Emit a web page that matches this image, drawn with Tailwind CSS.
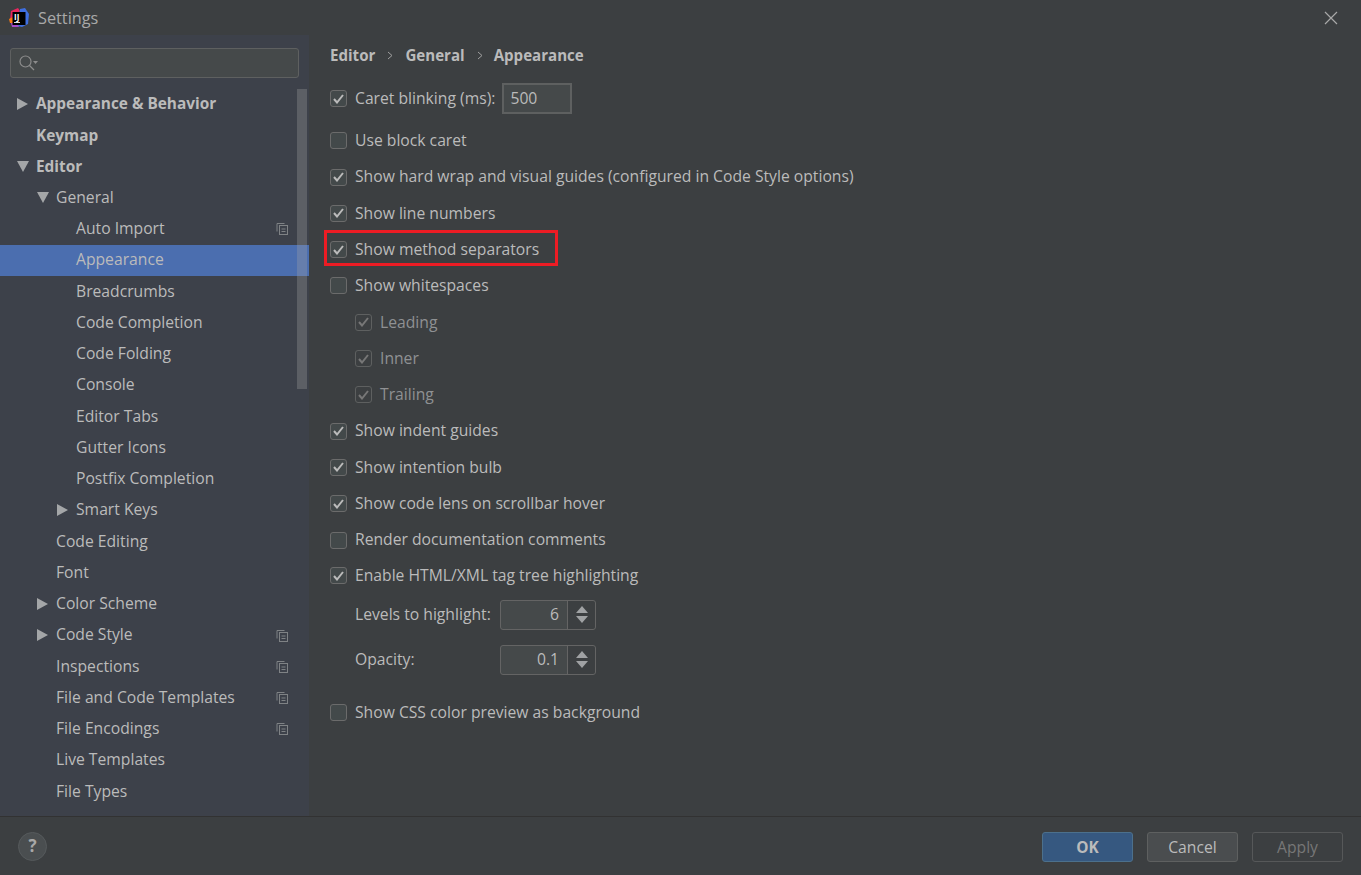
<!DOCTYPE html>
<html lang="en">
<head>
  <meta charset="UTF-8">
  <title>Settings</title>
  <script src="https://cdn.jsdelivr.net/npm/@tailwindcss/browser@4"></script>
</head>
<body class="bg-[#3c3f41] text-[#bbbbbb] font-['Open_Sans','Noto_Sans',sans-serif] text-[15.7px] overflow-hidden">

<div class="flex flex-col h-[875px] w-[1361px]">
  <!-- title bar -->
  <header class="relative flex items-center h-[35px] shrink-0 pl-[9px] pr-[22px]">
    <svg class="w-[20px] h-[20px]" viewBox="0 0 20 20">
      <path d="M2 3 L9 0 L11 3 L3 17 L1 12 Z" fill="#e8265e"/>
      <path d="M0 11 L4 9 L4 15 L1 15 Z" fill="#f97a12"/>
      <path d="M11 1 L16 0 L20 6 L19 16 L13 19 L8 18 Z" fill="#3f6fe0"/>
      <path d="M2 15 L8 15 L10 19 L3 19 Z" fill="#a54bc9"/>
      <rect x="3.5" y="4" width="13" height="13" fill="#000"/>
      <rect x="5" y="14" width="6" height="1" fill="#ddd"/>
    </svg>
    <span class="absolute left-[14px] top-[12px] text-[8px] font-bold text-white leading-[9px]">IJ</span>
    <span class="ml-[9px] mt-[1px] text-[#a9a9a9] text-[16.3px]">Settings</span>
    <svg class="ml-auto w-[16px] h-[16px]" viewBox="0 0 16 16" fill="none" stroke="#a8a8a8" stroke-width="1.2">
      <path d="M2 2 L14 14 M14 2 L2 14"/>
    </svg>
  </header>

  <div class="flex flex-1 min-h-0">
    <!-- sidebar -->
    <aside class="relative w-[309px] shrink-0 bg-[#3d414a] overflow-hidden">
      <div class="flex items-center mx-[10px] mt-[13px] h-[30px] bg-[#45494a] border border-[#5e6060] rounded-[3px] pl-[7px]">
        <svg class="w-[22px] h-[18px]" viewBox="0 0 22 18" fill="none" stroke="#8c8c8c" stroke-width="1.2">
          <circle cx="7.5" cy="7.5" r="5.5"/>
          <path d="M11.5 11.5 L16 16"/>
          <path d="M15 7 L20 7 L17.5 10 Z" fill="#8c8c8c" stroke="none"/>
        </svg>
      </div>

      <nav class="mt-[10.25px]">
        <div class="flex items-center h-[31.25px] pl-[17px] font-bold text-[15.4px]"><svg class="w-[11px] h-[12px] mr-[8px]" viewBox="0 0 11 12"><path d="M0 0 L11 6 L0 12 Z" fill="#a4a6a8"/></svg>Appearance &amp; Behavior</div>
        <div class="flex items-center h-[31.25px] pl-[36px] font-bold text-[15.4px]">Keymap</div>
        <div class="flex items-center h-[31.25px] pl-[17px] font-bold text-[15.4px]"><svg class="w-[12px] h-[11px] mr-[7px]" viewBox="0 0 12 11"><path d="M0 0 L12 0 L6 11 Z" fill="#a4a6a8"/></svg>Editor</div>
        <div class="flex items-center h-[31.25px] pl-[37px]"><svg class="w-[12px] h-[11px] mr-[7px]" viewBox="0 0 12 11"><path d="M0 0 L12 0 L6 11 Z" fill="#a4a6a8"/></svg>General</div>
        <div class="flex items-center h-[31.25px] pl-[76px] pr-[21px] justify-between">Auto Import<svg class="w-[12px] h-[13px]" viewBox="0 0 12 13" fill="none" stroke="#7f8285"><path d="M8.5 1.5 H1 V9.5"/><rect x="3.5" y="3.5" width="8" height="9"/><path d="M5.5 7 H9.5 M5.5 9.5 H9.5"/></svg></div>
        <div class="flex items-center h-[31.25px] pl-[76px] bg-[#4b6eaf]">Appearance</div>
        <div class="flex items-center h-[31.25px] pl-[76px]">Breadcrumbs</div>
        <div class="flex items-center h-[31.25px] pl-[76px]">Code Completion</div>
        <div class="flex items-center h-[31.25px] pl-[76px]">Code Folding</div>
        <div class="flex items-center h-[31.25px] pl-[76px]">Console</div>
        <div class="flex items-center h-[31.25px] pl-[76px]">Editor Tabs</div>
        <div class="flex items-center h-[31.25px] pl-[76px]">Gutter Icons</div>
        <div class="flex items-center h-[31.25px] pl-[76px]">Postfix Completion</div>
        <div class="flex items-center h-[31.25px] pl-[57px]"><svg class="w-[11px] h-[12px] mr-[8px]" viewBox="0 0 11 12"><path d="M0 0 L11 6 L0 12 Z" fill="#a4a6a8"/></svg>Smart Keys</div>
        <div class="flex items-center h-[31.25px] pl-[56px]">Code Editing</div>
        <div class="flex items-center h-[31.25px] pl-[56px]">Font</div>
        <div class="flex items-center h-[31.25px] pl-[37px]"><svg class="w-[11px] h-[12px] mr-[8px]" viewBox="0 0 11 12"><path d="M0 0 L11 6 L0 12 Z" fill="#a4a6a8"/></svg>Color Scheme</div>
        <div class="flex items-center h-[31.25px] pl-[37px] pr-[21px]"><svg class="w-[11px] h-[12px] mr-[8px]" viewBox="0 0 11 12"><path d="M0 0 L11 6 L0 12 Z" fill="#a4a6a8"/></svg>Code Style<svg class="w-[12px] h-[13px] ml-auto" viewBox="0 0 12 13" fill="none" stroke="#7f8285"><path d="M8.5 1.5 H1 V9.5"/><rect x="3.5" y="3.5" width="8" height="9"/><path d="M5.5 7 H9.5 M5.5 9.5 H9.5"/></svg></div>
        <div class="flex items-center h-[31.25px] pl-[56px] pr-[21px] justify-between">Inspections<svg class="w-[12px] h-[13px]" viewBox="0 0 12 13" fill="none" stroke="#7f8285"><path d="M8.5 1.5 H1 V9.5"/><rect x="3.5" y="3.5" width="8" height="9"/><path d="M5.5 7 H9.5 M5.5 9.5 H9.5"/></svg></div>
        <div class="flex items-center h-[31.25px] pl-[56px] pr-[21px] justify-between">File and Code Templates<svg class="w-[12px] h-[13px]" viewBox="0 0 12 13" fill="none" stroke="#7f8285"><path d="M8.5 1.5 H1 V9.5"/><rect x="3.5" y="3.5" width="8" height="9"/><path d="M5.5 7 H9.5 M5.5 9.5 H9.5"/></svg></div>
        <div class="flex items-center h-[31.25px] pl-[56px] pr-[21px] justify-between">File Encodings<svg class="w-[12px] h-[13px]" viewBox="0 0 12 13" fill="none" stroke="#7f8285"><path d="M8.5 1.5 H1 V9.5"/><rect x="3.5" y="3.5" width="8" height="9"/><path d="M5.5 7 H9.5 M5.5 9.5 H9.5"/></svg></div>
        <div class="flex items-center h-[31.25px] pl-[56px]">Live Templates</div>
        <div class="flex items-center h-[31.25px] pl-[56px]">File Types</div>
      </nav>

      <!-- scrollbar thumb, lies over the tree -->
      <div class="absolute left-[297px] top-[54px] w-[10px] h-[300px] bg-[#a6a6a6]/30"></div>
    </aside>

    <!-- options -->
    <main class="flex-1 pl-[21px]">
      <div class="flex items-center h-[41px] font-bold text-[15.1px]">
        Editor
        <svg class="w-[6px] h-[9px] mx-[12px]" viewBox="0 0 6 9" fill="none" stroke="#a0a0a0"><path d="M1 1 L5 4.5 L1 8"/></svg>
        General
        <svg class="w-[6px] h-[9px] ml-[12px] mr-[11px]" viewBox="0 0 6 9" fill="none" stroke="#a0a0a0"><path d="M1 1 L5 4.5 L1 8"/></svg>
        Appearance
      </div>

      <div class="flex items-center h-[36px] mt-[4.5px]">
        <span class="flex items-center justify-center w-[17px] h-[17px] bg-[#43494a] border border-[#6b6b6b] rounded-[3px]"><svg class="w-[11px] h-[10px]" viewBox="0 0 11 10" fill="none" stroke="#bbbbbb" stroke-width="2"><path d="M1 5 L4 8.5 L10 1"/></svg></span>
        <span class="ml-[8px]">Caret blinking (ms):</span>
        <span class="ml-[7px] w-[70px] h-[31px] flex items-center pl-[6px] bg-[#45494a] border-2 border-[#5e6060]">500</span>
      </div>

      <div class="flex items-center h-[36px] mt-[6px]">
        <span class="w-[17px] h-[17px] bg-[#43494a] border border-[#6b6b6b] rounded-[3px]"></span>
        <span class="ml-[8px]">Use block caret</span>
      </div>

      <div class="flex items-center h-[35.9px] mt-[0.8px]">
        <span class="flex items-center justify-center w-[17px] h-[17px] bg-[#43494a] border border-[#6b6b6b] rounded-[3px]"><svg class="w-[11px] h-[10px]" viewBox="0 0 11 10" fill="none" stroke="#bbbbbb" stroke-width="2"><path d="M1 5 L4 8.5 L10 1"/></svg></span>
        <span class="ml-[8px]">Show hard wrap and visual guides (configured in Code Style options)</span>
      </div>
      <div class="flex items-center h-[36.3px]">
        <span class="flex items-center justify-center w-[17px] h-[17px] bg-[#43494a] border border-[#6b6b6b] rounded-[3px]"><svg class="w-[11px] h-[10px]" viewBox="0 0 11 10" fill="none" stroke="#bbbbbb" stroke-width="2"><path d="M1 5 L4 8.5 L10 1"/></svg></span>
        <span class="ml-[8px]">Show line numbers</span>
      </div>
      <div class="relative flex items-center h-[36.3px]">
        <span class="flex items-center justify-center w-[17px] h-[17px] bg-[#43494a] border border-[#6b6b6b] rounded-[3px]"><svg class="w-[11px] h-[10px]" viewBox="0 0 11 10" fill="none" stroke="#bbbbbb" stroke-width="2"><path d="M1 5 L4 8.5 L10 1"/></svg></span>
        <span class="ml-[8px]">Show method separators</span>
        <!-- annotation box drawn over the row -->
        <div class="absolute left-[-6px] top-[-1px] w-[234px] h-[36px] border-[3px] border-[#ed1c24]"></div>
      </div>
      <div class="flex items-center h-[36.3px]">
        <span class="w-[17px] h-[17px] bg-[#43494a] border border-[#6b6b6b] rounded-[3px]"></span>
        <span class="ml-[8px]">Show whitespaces</span>
      </div>

      <div class="flex items-center h-[36px] mt-[0.3px] pl-[25px] text-[#8f9193]">
        <span class="flex items-center justify-center w-[17px] h-[17px] border border-[#5e6060] rounded-[3px]"><svg class="w-[11px] h-[10px]" viewBox="0 0 11 10" fill="none" stroke="#777777" stroke-width="2"><path d="M1 5 L4 8.5 L10 1"/></svg></span>
        <span class="ml-[8px]">Leading</span>
      </div>
      <div class="flex items-center h-[36.3px] pl-[25px] text-[#8f9193]">
        <span class="flex items-center justify-center w-[17px] h-[17px] border border-[#5e6060] rounded-[3px]"><svg class="w-[11px] h-[10px]" viewBox="0 0 11 10" fill="none" stroke="#777777" stroke-width="2"><path d="M1 5 L4 8.5 L10 1"/></svg></span>
        <span class="ml-[8px]">Inner</span>
      </div>
      <div class="flex items-center h-[36.3px] pl-[25px] text-[#8f9193]">
        <span class="flex items-center justify-center w-[17px] h-[17px] border border-[#5e6060] rounded-[3px]"><svg class="w-[11px] h-[10px]" viewBox="0 0 11 10" fill="none" stroke="#777777" stroke-width="2"><path d="M1 5 L4 8.5 L10 1"/></svg></span>
        <span class="ml-[8px]">Trailing</span>
      </div>

      <div class="flex items-center h-[36.3px]">
        <span class="flex items-center justify-center w-[17px] h-[17px] bg-[#43494a] border border-[#6b6b6b] rounded-[3px]"><svg class="w-[11px] h-[10px]" viewBox="0 0 11 10" fill="none" stroke="#bbbbbb" stroke-width="2"><path d="M1 5 L4 8.5 L10 1"/></svg></span>
        <span class="ml-[8px]">Show indent guides</span>
      </div>
      <div class="flex items-center h-[36.3px]">
        <span class="flex items-center justify-center w-[17px] h-[17px] bg-[#43494a] border border-[#6b6b6b] rounded-[3px]"><svg class="w-[11px] h-[10px]" viewBox="0 0 11 10" fill="none" stroke="#bbbbbb" stroke-width="2"><path d="M1 5 L4 8.5 L10 1"/></svg></span>
        <span class="ml-[8px]">Show intention bulb</span>
      </div>
      <div class="flex items-center h-[36.3px]">
        <span class="flex items-center justify-center w-[17px] h-[17px] bg-[#43494a] border border-[#6b6b6b] rounded-[3px]"><svg class="w-[11px] h-[10px]" viewBox="0 0 11 10" fill="none" stroke="#bbbbbb" stroke-width="2"><path d="M1 5 L4 8.5 L10 1"/></svg></span>
        <span class="ml-[8px]">Show code lens on scrollbar hover</span>
      </div>
      <div class="flex items-center h-[36.3px]">
        <span class="w-[17px] h-[17px] bg-[#43494a] border border-[#6b6b6b] rounded-[3px]"></span>
        <span class="ml-[8px]">Render documentation comments</span>
      </div>
      <div class="flex items-center h-[35.6px]">
        <span class="flex items-center justify-center w-[17px] h-[17px] bg-[#43494a] border border-[#6b6b6b] rounded-[3px]"><svg class="w-[11px] h-[10px]" viewBox="0 0 11 10" fill="none" stroke="#bbbbbb" stroke-width="2"><path d="M1 5 L4 8.5 L10 1"/></svg></span>
        <span class="ml-[8px]">Enable HTML/XML tag tree highlighting</span>
      </div>

      <div class="flex items-center h-[30px] mt-[6px] pl-[25px]">
        <span class="w-[145px]">Levels to highlight:</span>
        <div class="flex w-[96px] h-[30px] bg-[#45494a] border border-[#646464] rounded-[3px]">
          <span class="flex-1 flex items-center justify-end pr-[8px] border-r border-[#646464]">6</span>
          <span class="flex flex-col items-center justify-center gap-[3px] w-[27px] bg-[#3c3f41] rounded-r-[3px]">
            <svg class="w-[12px] h-[7px]" viewBox="0 0 12 7"><path d="M6 0 L12 7 L0 7 Z" fill="#a0a2a4"/></svg>
            <svg class="w-[12px] h-[7px]" viewBox="0 0 12 7"><path d="M0 0 L12 0 L6 7 Z" fill="#a0a2a4"/></svg>
          </span>
        </div>
      </div>
      <div class="flex items-center h-[30px] mt-[15px] pl-[25px]">
        <span class="w-[145px] pt-[1px]">Opacity:</span>
        <div class="flex w-[96px] h-[30px] bg-[#45494a] border border-[#646464] rounded-[3px]">
          <span class="flex-1 flex items-center justify-end pr-[8px] border-r border-[#646464]">0.1</span>
          <span class="flex flex-col items-center justify-center gap-[3px] w-[27px] bg-[#3c3f41] rounded-r-[3px]">
            <svg class="w-[12px] h-[7px]" viewBox="0 0 12 7"><path d="M6 0 L12 7 L0 7 Z" fill="#a0a2a4"/></svg>
            <svg class="w-[12px] h-[7px]" viewBox="0 0 12 7"><path d="M0 0 L12 0 L6 7 Z" fill="#a0a2a4"/></svg>
          </span>
        </div>
      </div>

      <div class="flex items-center h-[36px] mt-[20px]">
        <span class="w-[17px] h-[17px] bg-[#43494a] border border-[#6b6b6b] rounded-[3px]"></span>
        <span class="ml-[8px]">Show CSS color preview as background</span>
      </div>
    </main>
  </div>

  <!-- footer -->
  <footer class="flex items-center h-[59px] shrink-0 border-t border-[#323232] pl-[18px] pr-[18px]">
    <span class="flex items-center justify-center w-[29px] h-[29px] rounded-full bg-[#4a4e50] border border-[#565a5c] font-bold text-[#a8a8a8] text-[17px]">?</span>
    <button class="ml-auto mt-[1px] pt-[2px] w-[91px] h-[30px] bg-[#365880] border border-[#4c708c] rounded-[3px] font-bold text-[15.4px]">OK</button>
    <button class="ml-[14px] mt-[1px] pt-[2px] w-[91px] h-[30px] bg-[#4a4d4f] border border-[#5e6060] rounded-[3px]">Cancel</button>
    <button class="ml-[14px] mt-[1px] pt-[2px] w-[91px] h-[30px] border border-[#565859] rounded-[3px] text-[#777777]">Apply</button>
  </footer>
</div>

</body>
</html>
